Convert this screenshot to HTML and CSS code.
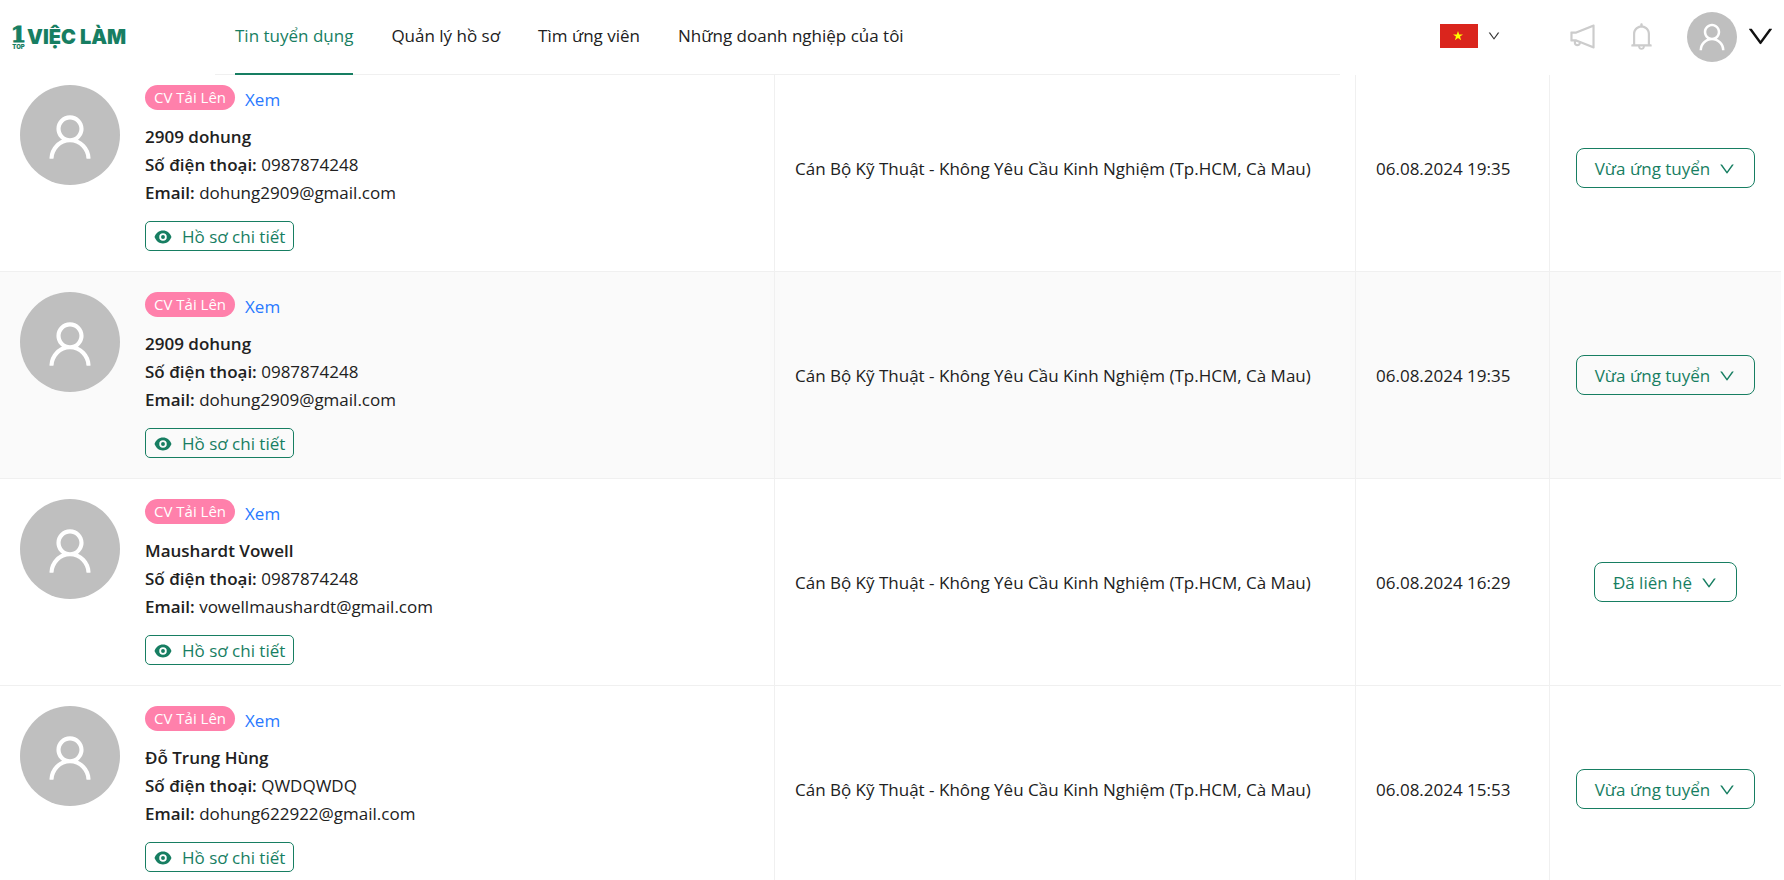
FILE: index.html
```html
<!DOCTYPE html>
<html lang="vi">
<head>
<meta charset="utf-8">
<title>Top1 Việc Làm</title>
<link rel="stylesheet" href="styles.css">
</head>
<body>
<svg class="sprite" aria-hidden="true">
  <symbol id="user" viewBox="0 0 1024 1024"><path d="M858.5 763.6a374 374 0 0 0-80.6-119.5 375.63 375.63 0 0 0-119.5-80.6c-.4-.2-.8-.3-1.2-.5C719.5 518 760 444.7 760 362c0-137-111-248-248-248S264 225 264 362c0 82.7 40.5 156 102.8 201.1-.4.2-.8.3-1.2.5-44.8 18.9-85 46-119.5 80.6a375.63 375.63 0 0 0-80.6 119.5A371.7 371.7 0 0 0 136 901.8a8 8 0 0 0 8 8.2h60c4.4 0 7.9-3.5 8-7.8 2-77.2 33-149.5 87.8-204.3 56.7-56.7 132-87.9 212.2-87.9s155.5 31.2 212.2 87.9C779 752.7 810 825 812 902.2c.1 4.4 3.6 7.8 8 7.8h60a8 8 0 0 0 8-8.2c-1-47.8-10.9-94.3-29.5-138.2zM512 534c-45.9 0-89.1-17.9-121.6-50.4S340 407.9 340 362c0-45.9 17.9-89.1 50.4-121.6S466.1 190 512 190s89.1 17.9 121.6 50.4S684 316.1 684 362c0 45.9-17.9 89.1-50.4 121.6S557.9 534 512 534z"/></symbol>
  <symbol id="down" viewBox="0 0 1024 1024"><path d="M884 256h-75c-5.1 0-9.9 2.5-12.9 6.6L512 654.2 227.9 262.6c-3-4.1-7.8-6.6-12.9-6.6h-75c-6.5 0-10.3 7.4-6.5 12.7l352.6 486.1c12.8 17.6 39 17.6 51.7 0l352.6-486.1c3.9-5.3.1-12.7-6.4-12.7z"/></symbol>
  <symbol id="horn" viewBox="0 0 1024 1024"><path d="M880 112c-3.8 0-7.7.7-11.6 2.3L292 345.9H128c-8.8 0-16 7.4-16 16.6v299c0 9.2 7.2 16.6 16 16.6h101.7c-3.7 11.6-5.7 23.9-5.7 36.4 0 65.9 53.8 119.5 120 119.5 55.4 0 102.1-37.6 115.9-88.4l408.6 164.2c3.9 1.5 7.8 2.3 11.6 2.3 16.9 0 32-14.2 32-33.2V145.2C912 126.2 897 112 880 112zM344 762.3c-26.5 0-48-21.4-48-47.8 0-11.2 3.9-21.9 11-30.4l84.9 34.1c-2 24.6-22.7 44.1-47.9 44.1zm496 58.4L318.8 611.3l-12.9-5.2H184V417.9h121.9l12.9-5.2L840 203.3v617.4z"/></symbol>
  <symbol id="bell" viewBox="0 0 1024 1024"><path d="M816 768h-24V428c0-141.1-104.3-257.7-240-277.1V112c0-22.1-17.9-40-40-40s-40 17.9-40 40v38.9c-135.7 19.4-240 136-240 277.1v340h-24c-17.7 0-32 14.3-32 32v32c0 4.4 3.6 8 8 8h216c0 61.8 50.2 112 112 112s112-50.2 112-112h216c4.4 0 8-3.6 8-8v-32c0-17.7-14.3-32-32-32zM512 888c-26.5 0-48-21.5-48-48h96c0 26.5-21.5 48-48 48zM304 768V428c0-55.6 21.6-107.8 60.9-147.1S456.4 220 512 220c55.6 0 107.8 21.6 147.1 60.9S720 372.4 720 428v340H304z"/></symbol>
  <symbol id="eye" viewBox="0 0 24 24"><path fill-rule="evenodd" d="M12 3.400C6.500 3.400 2.600 7 .7 12c1.900 5 5.800 8.600 11.300 8.600s9.400-3.600 11.300-8.600c-1.900-5-5.800-8.600-11.300-8.600zM12 17a5 5 0 1 1 0-10 5 5 0 0 1 0 10zM12 9.400a2.600 2.600 0 1 0 0 5.200 2.600 2.600 0 0 0 0-5.200z"/></symbol>
</svg>

<header class="header">
  <a class="logo" href="#" aria-label="Top1 Việc Làm">
    <span class="logo-mark"><span class="logo-one">1</span><span class="logo-top">TOP</span></span>
    <span class="logo-name">VIỆC LÀM</span>
  </a>
  <nav class="nav">
    <a class="nav-link active" href="#">Tin tuyển dụng</a>
    <a class="nav-link" href="#">Quản lý hồ sơ</a>
    <a class="nav-link" href="#">Tìm ứng viên</a>
    <a class="nav-link" href="#">Những doanh nghiệp của tôi</a>
  </nav>
  <div class="tools">
    <button class="tool language" aria-label="Ngôn ngữ">
      <svg class="flag" viewBox="0 0 38 24"><path fill="#da251d" d="M0 0h38v24H0z"/><path fill="#ff0" d="M18 7l1.200 3.400h3.800l-3 2.200 1.100 3.600L18 14l-3.100 2.200 1.100-3.600-3-2.200h3.800z"/></svg>
      <svg class="icon icon-sm"><use href="#down"/></svg>
    </button>
    <button class="tool" aria-label="Tin tức"><svg class="icon icon-lg"><use href="#horn"/></svg></button>
    <button class="tool" aria-label="Thông báo"><svg class="icon icon-lg"><use href="#bell"/></svg></button>
    <button class="tool account" aria-label="Tài khoản">
      <span class="avatar avatar-sm"><svg class="avatar-icon"><use href="#user"/></svg></span>
      <svg class="icon icon-lg"><use href="#down"/></svg>
    </button>
  </div>
</header>

<main class="main">
  <table class="table">
    <colgroup><col class="col-person"><col class="col-job"><col class="col-time"><col class="col-status"></colgroup>
    <tbody>
      <tr>
        <td><div class="person"><span class="avatar"><svg class="avatar-icon"><use href="#user"/></svg></span>
          <div class="info">
            <div class="cv"><span class="badge">CV Tải Lên</span><a class="view" href="#">Xem</a></div>
            <div class="line"><b>2909 dohung</b></div>
            <div class="line"><b>Số điện thoại:</b> 0987874248</div>
            <div class="line"><b>Email:</b> dohung2909@gmail.com</div>
            <button class="detail"><svg class="icon icon-md"><use href="#eye"/></svg>Hồ sơ chi tiết</button>
          </div></div></td>
        <td class="text-cell">Cán Bộ Kỹ Thuật - Không Yêu Cầu Kinh Nghiệm (Tp.HCM, Cà Mau)</td>
        <td class="text-cell">06.08.2024 19:35</td>
        <td class="status-cell"><button class="status">Vừa ứng tuyển<svg class="icon icon-md"><use href="#down"/></svg></button></td>
      </tr>
      <tr class="hovered">
        <td><div class="person"><span class="avatar"><svg class="avatar-icon"><use href="#user"/></svg></span>
          <div class="info">
            <div class="cv"><span class="badge">CV Tải Lên</span><a class="view" href="#">Xem</a></div>
            <div class="line"><b>2909 dohung</b></div>
            <div class="line"><b>Số điện thoại:</b> 0987874248</div>
            <div class="line"><b>Email:</b> dohung2909@gmail.com</div>
            <button class="detail"><svg class="icon icon-md"><use href="#eye"/></svg>Hồ sơ chi tiết</button>
          </div></div></td>
        <td class="text-cell">Cán Bộ Kỹ Thuật - Không Yêu Cầu Kinh Nghiệm (Tp.HCM, Cà Mau)</td>
        <td class="text-cell">06.08.2024 19:35</td>
        <td class="status-cell"><button class="status">Vừa ứng tuyển<svg class="icon icon-md"><use href="#down"/></svg></button></td>
      </tr>
      <tr>
        <td><div class="person"><span class="avatar"><svg class="avatar-icon"><use href="#user"/></svg></span>
          <div class="info">
            <div class="cv"><span class="badge">CV Tải Lên</span><a class="view" href="#">Xem</a></div>
            <div class="line"><b>Maushardt Vowell</b></div>
            <div class="line"><b>Số điện thoại:</b> 0987874248</div>
            <div class="line"><b>Email:</b> vowellmaushardt@gmail.com</div>
            <button class="detail"><svg class="icon icon-md"><use href="#eye"/></svg>Hồ sơ chi tiết</button>
          </div></div></td>
        <td class="text-cell">Cán Bộ Kỹ Thuật - Không Yêu Cầu Kinh Nghiệm (Tp.HCM, Cà Mau)</td>
        <td class="text-cell">06.08.2024 16:29</td>
        <td class="status-cell"><button class="status">Đã liên hệ<svg class="icon icon-md"><use href="#down"/></svg></button></td>
      </tr>
      <tr>
        <td><div class="person"><span class="avatar"><svg class="avatar-icon"><use href="#user"/></svg></span>
          <div class="info">
            <div class="cv"><span class="badge">CV Tải Lên</span><a class="view" href="#">Xem</a></div>
            <div class="line"><b>Đỗ Trung Hùng</b></div>
            <div class="line"><b>Số điện thoại:</b> QWDQWDQ</div>
            <div class="line"><b>Email:</b> dohung622922@gmail.com</div>
            <button class="detail"><svg class="icon icon-md"><use href="#eye"/></svg>Hồ sơ chi tiết</button>
          </div></div></td>
        <td class="text-cell">Cán Bộ Kỹ Thuật - Không Yêu Cầu Kinh Nghiệm (Tp.HCM, Cà Mau)</td>
        <td class="text-cell">06.08.2024 15:53</td>
        <td class="status-cell"><button class="status">Vừa ứng tuyển<svg class="icon icon-md"><use href="#down"/></svg></button></td>
      </tr>
    </tbody>
  </table>
</main>
</body>
</html>
```
FILE: styles.css
```css
:root {
  --green: #177e62;
  --line: #f0f0f0;
  --grey: #bfbfbf;
}
* { box-sizing: border-box; }
body {
  margin: 0;
  background: #fff;
  color: #212121;
  font: 400 17px/28px "Open Sans", "Noto Sans", sans-serif;
}
html { scrollbar-width: none; }
a { text-decoration: none; color: inherit; }
button { font: inherit; color: inherit; background: none; border: 0; padding: 0; cursor: pointer; }
.sprite { display: none; }
.icon { display: block; flex: none; fill: currentColor; }
.icon-sm { width: 14px; height: 14px; }
.icon-md { width: 18px; height: 18px; }
.icon-lg { width: 31px; height: 31px; }

.header {
  position: fixed;
  top: 0;
  left: 0;
  right: 0;
  z-index: 10;
  height: 75px;
  display: flex;
  background: #fff;
  padding: 0 8px 0 10px;
}
.logo {
  flex: 0 0 205px;
  display: flex;
  align-items: center;
  padding-bottom: 2px;
  color: var(--green);
  font-family: Inter, sans-serif;
  font-weight: 900;
}
.logo-mark { width: 17px; display: flex; flex-direction: column; text-align: center; }
.logo-one { font: 700 22px/20px "DejaVu Serif", serif; -webkit-text-stroke: 1px var(--green); }
.logo-top { font-size: 6px; line-height: 6px; }
.logo-name { font-size: 20px; }
.nav {
  flex: 1;
  display: flex;
  padding: 0 20px;
  gap: 38px;
  border-bottom: 1px solid var(--line);
}
.nav-link { height: 75px; padding-top: 22px; white-space: nowrap; }
.nav-link.active { color: var(--green); border-bottom: 2px solid var(--green); }
.tools {
  flex: 0 0 436px;
  display: flex;
  justify-content: flex-end;
  align-items: center;
  gap: 28px;
  padding-bottom: 2px;
}
.tool { display: flex; align-items: center; color: #ccc; }
.language { gap: 9px; margin-right: 38px; padding-bottom: 2px; color: #333; }
.account { gap: 8px; margin-left: 2px; color: #111; }
.flag { width: 38px; height: 24px; display: block; }
.avatar {
  flex: none;
  width: 100px;
  height: 100px;
  border-radius: 50%;
  background: var(--grey);
  color: #fff;
  display: flex;
  justify-content: center;
  align-items: center;
}
.avatar-icon { width: 56px; height: 56px; fill: currentColor; margin-top: 4px; }
.avatar-sm { width: 50px; height: 50px; }
.avatar-sm .avatar-icon { width: 34px; height: 34px; margin-top: 0; }

.main { padding-top: 65px; padding-right: 3px; height: 100vh; overflow: hidden; }
.table { width: 100%; border-collapse: separate; border-spacing: 0; table-layout: fixed; }
.col-job { width: 581px; }
.col-time { width: 194px; }
.col-status { width: 231px; }
.table td { padding: 20px; border-right: 1px solid var(--line); border-bottom: 1px solid var(--line); white-space: nowrap; }
.table td:last-child { border-right: 0; }
.table .text-cell { padding-bottom: 18px; }
.hovered td { background: #fafafa; }
.person { display: flex; gap: 25px; }
.cv { display: flex; align-items: flex-start; gap: 10px; height: 38px; }
.badge { background: #ff80ab; color: #fff; border-radius: 13px; padding: 0 9px; font-size: 15px; line-height: 25px; }
.view { color: #2979ff; padding-top: 1px; }
.line { height: 28px; }
.line b { font-weight: 600; }
.detail {
  display: flex;
  align-items: center;
  gap: 10px;
  height: 30px;
  margin-top: 14px;
  padding: 1px 8px 0;
  border: 1px solid var(--green);
  border-radius: 5px;
  color: var(--green);
}
.status-cell { text-align: center; }
.status {
  display: inline-flex;
  align-items: center;
  gap: 8px;
  height: 40px;
  padding: 1px 18px 0;
  border: 1px solid var(--green);
  border-radius: 8px;
  color: var(--green);
  vertical-align: middle;
}
```
